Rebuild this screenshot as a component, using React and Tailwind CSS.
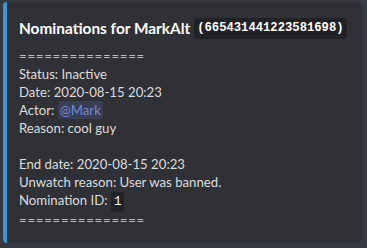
export default function App() {
  const body = "font-['Lato','Noto_Sans',sans-serif]";
  return (
    <div className="w-[367px] h-[248px] bg-[#36393f] pt-[2px] pl-[3px] pr-[5px]">
      <div className="h-[241px] bg-[#2f3136] rounded-[4px] border-l-4 border-[#3498db] pl-[12px] pr-[10px] pt-[15px]">
        <div className="flex items-center h-[23px] text-white whitespace-nowrap">
          <span className={`font-bold text-[15.4px] ${body}`}>Nominations for MarkAlt</span>
          <span className="ml-[4px] shrink-0 bg-[#202225] rounded-[4px] px-[3px] h-[21px] flex items-center font-['Liberation_Mono',monospace] font-bold text-[12.2px] text-white">
            (665431441223581698)
          </span>
        </div>
        <div className={`mt-[7px] text-[13.2px] leading-[18px] text-[#dcddde] ${body}`}>
          <div className="text-[#b9bbbe] tracking-[0.75px]">===============</div>
          <div>Status: Inactive</div>
          <div>Date: 2020-08-15 20:23</div>
          <div>
            Actor:{" "}
            <span className="bg-[#3a3e55] text-[#7289da] rounded-[3px] px-[2px] py-[1px]">@Mark</span>
          </div>
          <div>Reason: cool guy</div>
          <div className="h-[18px]"></div>
          <div>End date: 2020-08-15 20:23</div>
          <div>Unwatch reason: User was banned.</div>
          <div>
            Nomination ID:{" "}
            <span className="bg-[#202225] rounded-[3px] px-[3px] py-[3px] font-['Liberation_Mono',monospace] text-[12.5px] text-white">1</span>
          </div>
          <div className="text-[#b9bbbe] tracking-[0.75px]">===============</div>
        </div>
      </div>
    </div>
  );
}
